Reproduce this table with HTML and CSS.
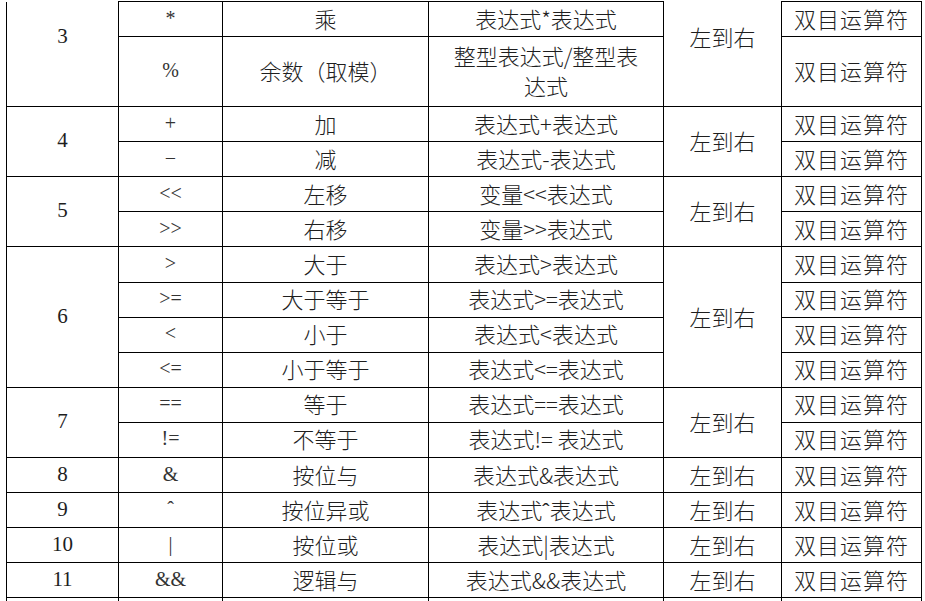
FILE: index.html
```html
<!DOCTYPE html>
<html lang="zh-CN">
<head>
<meta charset="utf-8">
<title>运算符优先级</title>
<link rel="stylesheet" href="styles.css">
</head>
<body>
<table class="ops">
  <colgroup>
    <col class="c-level">
    <col class="c-op">
    <col class="c-name">
    <col class="c-form">
    <col class="c-dir">
    <col class="c-kind">
  </colgroup>
  <tbody>
    <tr>
      <td class="level cont" rowspan="2">3</td>
      <td class="op">*</td>
      <td>乘</td>
      <td>表达式*表达式</td>
      <td class="cont" rowspan="2">左到右</td>
      <td class="kind">双目运算符</td>
    </tr>
    <tr class="tall">
      <td class="op">%</td>
      <td>余数（取模）</td>
      <td class="wrap">整型表达式/整型表<br>达式</td>
      <td class="kind">双目运算符</td>
    </tr>
    <tr>
      <td class="level" rowspan="2">4</td>
      <td class="op">+</td>
      <td>加</td>
      <td>表达式+表达式</td>
      <td rowspan="2">左到右</td>
      <td class="kind">双目运算符</td>
    </tr>
    <tr>
      <td class="op">−</td>
      <td>减</td>
      <td>表达式-表达式</td>
      <td class="kind">双目运算符</td>
    </tr>
    <tr>
      <td class="level" rowspan="2">5</td>
      <td class="op">&lt;&lt;</td>
      <td>左移</td>
      <td>变量&lt;&lt;表达式</td>
      <td rowspan="2">左到右</td>
      <td class="kind">双目运算符</td>
    </tr>
    <tr>
      <td class="op">&gt;&gt;</td>
      <td>右移</td>
      <td>变量&gt;&gt;表达式</td>
      <td class="kind">双目运算符</td>
    </tr>
    <tr>
      <td class="level" rowspan="4">6</td>
      <td class="op">&gt;</td>
      <td>大于</td>
      <td>表达式&gt;表达式</td>
      <td rowspan="4">左到右</td>
      <td class="kind">双目运算符</td>
    </tr>
    <tr>
      <td class="op">&gt;=</td>
      <td>大于等于</td>
      <td>表达式&gt;=表达式</td>
      <td class="kind">双目运算符</td>
    </tr>
    <tr>
      <td class="op">&lt;</td>
      <td>小于</td>
      <td>表达式&lt;表达式</td>
      <td class="kind">双目运算符</td>
    </tr>
    <tr>
      <td class="op">&lt;=</td>
      <td>小于等于</td>
      <td>表达式&lt;=表达式</td>
      <td class="kind">双目运算符</td>
    </tr>
    <tr>
      <td class="level" rowspan="2">7</td>
      <td class="op">==</td>
      <td>等于</td>
      <td>表达式==表达式</td>
      <td rowspan="2">左到右</td>
      <td class="kind">双目运算符</td>
    </tr>
    <tr>
      <td class="op">!=</td>
      <td>不等于</td>
      <td>表达式!= 表达式</td>
      <td class="kind">双目运算符</td>
    </tr>
    <tr>
      <td class="level">8</td>
      <td class="op">&amp;</td>
      <td>按位与</td>
      <td>表达式&amp;表达式</td>
      <td>左到右</td>
      <td class="kind">双目运算符</td>
    </tr>
    <tr>
      <td class="level">9</td>
      <td class="op">ˆ</td>
      <td>按位异或</td>
      <td>表达式ˆ表达式</td>
      <td>左到右</td>
      <td class="kind">双目运算符</td>
    </tr>
    <tr>
      <td class="level">10</td>
      <td class="op">|</td>
      <td>按位或</td>
      <td>表达式|表达式</td>
      <td>左到右</td>
      <td class="kind">双目运算符</td>
    </tr>
    <tr>
      <td class="level">11</td>
      <td class="op">&amp;&amp;</td>
      <td>逻辑与</td>
      <td>表达式&amp;&amp;表达式</td>
      <td>左到右</td>
      <td class="kind">双目运算符</td>
    </tr>
    <tr class="stub">
      <td></td>
      <td></td>
      <td></td>
      <td></td>
      <td></td>
      <td></td>
    </tr>
  </tbody>
</table>
</body>
</html>
```

FILE: styles.css
```css
html, body {
  margin: 0;
  padding: 0;
  background: #ffffff;
  overflow: hidden;
}

body {
  width: 925px;
  height: 601px;
}

.ops {
  margin: 1px 0 0 6px;
  border-collapse: collapse;
  table-layout: fixed;
  width: 916px;
  color: #1e1e1e;
  font-family: "Noto Sans CJK SC", sans-serif;
  font-weight: 300;
  font-size: 22px;
}

.c-level { width: 112px; }
.c-op { width: 104px; }
.c-name { width: 206px; }
.c-form { width: 235px; }
.c-dir { width: 118px; }
.c-kind { width: 140px; }

.ops tr {
  height: 35.1px;
}

.ops tr.tall {
  height: 70px;
}

.ops tr.stub {
  height: 10px;
}

.ops td {
  border: 1px solid #000000;
  padding: 0 0 3px 0;
  text-align: center;
  vertical-align: middle;
  line-height: 30px;
  white-space: nowrap;
}

.ops td.cont {
  border-top: none;
  padding-bottom: 36px;
}

.ops td.level {
  font-family: "Liberation Serif", serif;
  font-weight: 400;
  font-size: 21px;
}

.ops td.op {
  font-family: "Liberation Serif", serif;
  font-weight: 400;
  font-size: 20px;
  color: #333333;
}

.ops td.kind {
  letter-spacing: 1px;
}

.ops tr.stub td {
  padding: 0;
}
```
